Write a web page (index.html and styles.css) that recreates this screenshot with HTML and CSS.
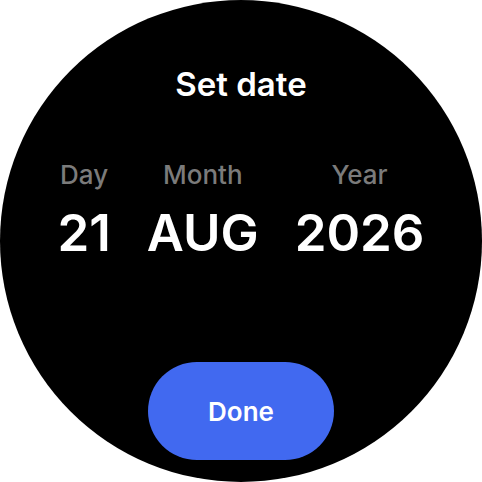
FILE: index.html
```html
<!DOCTYPE html>
<html>
<head>
<meta charset="utf-8">
<link rel="stylesheet" href="styles.css">
</head>
<body>
<div class="watch">
  <div class="title">Set date</div>
  <div class="picker">
    <div class="col"><div class="label">Day</div><div class="value">21</div></div>
    <div class="col"><div class="label">Month</div><div class="value">AUG</div></div>
    <div class="col"><div class="label">Year</div><div class="value">2026</div></div>
  </div>
  <div class="btn">Done</div>
</div>
</body>
</html>
```
FILE: styles.css
```css
html, body { margin: 0; padding: 0; background: #fff; }
.watch {
  width: 482px; height: 482px; border-radius: 50%; background: #000;
  display: flex; flex-direction: column; align-items: center;
  font-family: Inter, "Noto Sans", sans-serif; color: #fff;
  box-sizing: border-box; padding-top: 63px;
}
.title { font-size: 33px; font-weight: 600; line-height: 42px; }
.picker { display: flex; gap: 36px; margin-top: 53px; }
.col { display: flex; flex-direction: column; align-items: center; }
.label { font-size: 26px; font-weight: 500; color: #7b7b7b; line-height: 34px; }
.value { font-size: 51px; font-weight: 600; line-height: 60px; margin-top: 11px; }
.btn {
  margin-top: 99px; width: 186px; height: 98px; border-radius: 49px;
  background: #4169f0; display: flex; align-items: center; justify-content: center;
  font-size: 26px; font-weight: 600;
}
```
